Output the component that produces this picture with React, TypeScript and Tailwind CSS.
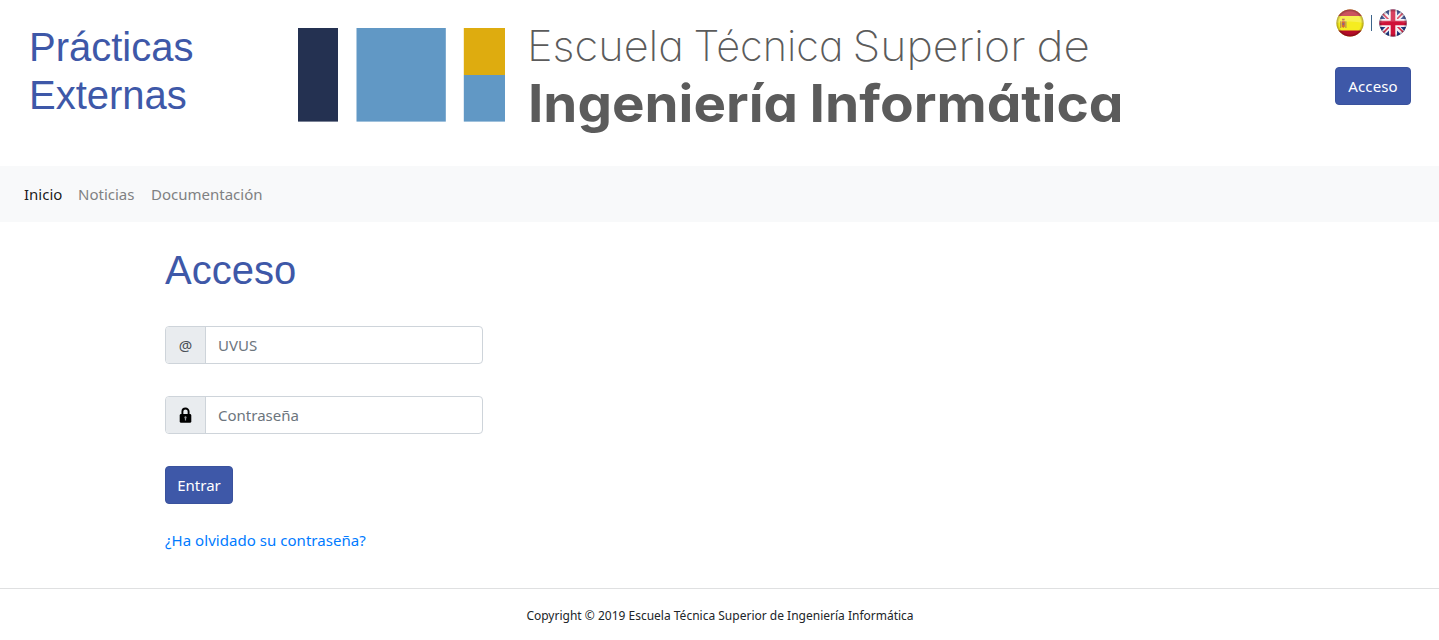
import React from "react";

const ui = "font-['Noto_Sans','Open_Sans',sans-serif]";
const heading = "font-['Liberation_Sans',Arial,sans-serif]";

const topWords = [
  { word: "Escuela", x: 527, width: 157 },
  { word: "Técnica", x: 693.5, width: 150 },
  { word: "Superior", x: 852.5, width: 173 },
  { word: "de", x: 1036.5, width: 53.5 },
];

const bottomWords = [
  { word: "Ingeniería", x: 528, width: 270 },
  { word: "Informática", x: 809.5, width: 314 },
];

function SchoolLogo() {
  return (
    <svg width="840" height="125" viewBox="290 20 840 125" role="img" aria-label="Escuela Técnica Superior de Ingeniería Informática">
      <rect x="298" y="28" width="40" height="93.6" fill="#243151" />
      <rect x="356.5" y="28" width="89.3" height="93.6" fill="#6198c5" />
      <rect x="463.8" y="28" width="41.2" height="47" fill="#deac0f" />
      <rect x="463.8" y="75" width="41.2" height="46.6" fill="#6198c5" />
      <g fill="#5b5b5b" className="font-['Inter',sans-serif] text-[42.5px] font-extralight [font-feature-settings:'cv11']">
        {topWords.map(({ word, x, width }) => (
          <text key={word} x={x} y="61" textLength={width} lengthAdjust="spacingAndGlyphs">{word}</text>
        ))}
      </g>
      <g fill="#5b5b5b" className="font-['Inter',sans-serif] text-[52px] font-bold [font-feature-settings:'cv11']">
        {bottomWords.map(({ word, x, width }) => (
          <text key={word} x={x} y="121.5" textLength={width} lengthAdjust="spacingAndGlyphs">{word}</text>
        ))}
      </g>
    </svg>
  );
}

function SpanishFlag() {
  return (
    <svg width="28" height="28" viewBox="0 0 28 28" role="img" aria-label="Español">
      <defs>
        <clipPath id="es-clip"><circle cx="14" cy="14" r="13.6" /></clipPath>
        <radialGradient id="es-shade" cx="50%" cy="50%" r="50%">
          <stop offset="78%" stopColor="#000" stopOpacity="0" />
          <stop offset="100%" stopColor="#300" stopOpacity=".4" />
        </radialGradient>
      </defs>
      <g clipPath="url(#es-clip)">
        <rect width="28" height="28" fill="#f5ed20" />
        <rect width="28" height="7" fill="#bd2433" />
        <rect y="21.5" width="28" height="6.5" fill="#b50d27" />
        <rect x="4" y="12" width="1.3" height="7" fill="#b99a4b" />
        <rect x="9.2" y="12" width="1.3" height="7" fill="#b99a4b" />
        <path d="M5.7 12h3.2v5.5l-1.6 1.6-1.6-1.6z" fill="#d46a35" />
        <path d="M5.9 9.8h2.9l-.4 1.7H6.3z" fill="#b64a38" />
        <rect x="6.4" y="14" width="1.8" height="2" fill="#8c6286" />
        <path d="M0 14Q14 11 28 14V0H0z" fill="#fff" opacity=".22" />
        <rect width="28" height="28" fill="url(#es-shade)" />
      </g>
    </svg>
  );
}

function BritishFlag() {
  return (
    <svg width="28" height="28" viewBox="0 0 28 28" role="img" aria-label="English">
      <defs>
        <clipPath id="en-clip"><circle cx="14" cy="14" r="13.6" /></clipPath>
        <radialGradient id="en-shade" cx="50%" cy="50%" r="50%">
          <stop offset="78%" stopColor="#000" stopOpacity="0" />
          <stop offset="100%" stopColor="#002" stopOpacity=".38" />
        </radialGradient>
      </defs>
      <g clipPath="url(#en-clip)">
        <rect width="28" height="28" fill="#203a84" />
        <path d="M1 1 27 27M27 1 1 27" stroke="#f3f1f5" strokeWidth="5" />
        <path d="M1 2 14 15M27 1 14 14M1 27 14 14M27 26 14 13" stroke="#d52745" strokeWidth="1.7" />
        <path d="M14 0V28M0 14H28" stroke="#f4f1f4" strokeWidth="8" />
        <path d="M14 0V28M0 14H28" stroke="#cf1238" strokeWidth="4.6" />
        <path d="M0 14Q14 11 28 14V0H0z" fill="#fff" opacity=".2" />
        <rect width="28" height="28" fill="url(#en-shade)" />
      </g>
    </svg>
  );
}

function LockIcon() {
  return (
    <svg width="13" height="16" viewBox="0 0 13 16" aria-hidden="true">
      <path d="M3.4 7.5V4.6a3.1 3.1 0 0 1 6.2 0v2.9" fill="none" stroke="#000" strokeWidth="1.9" />
      <rect x=".7" y="7" width="11.6" height="8.8" rx="1.4" fill="#000" />
      <path d="M6.5 9.3a1.2 1.2 0 0 0-.6 2.2v2.1h1.2v-2.1a1.2 1.2 0 0 0-.6-2.2z" fill="#9a9da0" />
    </svg>
  );
}

function Field({ icon, placeholder, type }: { icon: React.ReactNode; placeholder: string; type: string }) {
  return (
    <div className="flex h-[38px] w-[318px] rounded border border-[#ced4da] bg-white">
      <span className="flex w-[39px] shrink-0 items-center justify-center rounded-l-[3px] bg-[#e9ecef] text-[15px] text-[#495057]">{icon}</span>
      <input type={type} placeholder={placeholder} className="min-w-0 flex-1 rounded-r-[3px] border-l border-[#ced4da] px-3 text-[15px] text-[#495057] outline-none placeholder:text-[#6c757d]" />
    </div>
  );
}

export default function App() {
  return (
    <div className={`h-[640px] w-full overflow-hidden bg-white text-[15px] leading-6 text-[#212529] ${ui}`}>
      <header className="flex h-[166px]">
        <h1 className={`ml-[29px] mt-[23px] w-[261px] pr-16 text-[40px] leading-[48px] text-[#3e58a8] ${heading}`}>Prácticas Externas</h1>
        <div className="pt-5"><SchoolLogo /></div>
        <div className="ml-auto mr-7 flex w-[76px] flex-col pt-[9px]">
          <div className="flex h-7 items-center gap-[7px] pl-[1px]">
            <SpanishFlag />
            <span className="h-4 w-px shrink-0 bg-[#3c648b]" />
            <BritishFlag />
          </div>
          <button className="mt-[30px] h-[38px] w-[76px] rounded border border-[#3a529d] bg-[#3e58a8] text-[15px] tracking-[0.1px] text-white">Acceso</button>
        </div>
      </header>
      <nav className="flex h-14 items-center gap-4 bg-[#f8f9fa] pl-6 text-[#808182]">
        <a className="w-[38px] whitespace-nowrap text-black/90">Inicio</a>
        <a className="w-[57px] whitespace-nowrap">Noticias</a>
        <a className="whitespace-nowrap">Documentación</a>
      </nav>
      <main className="flex h-[366px] flex-col items-start pl-[165px] pt-6">
        <h2 className={`text-[40px] leading-[48px] text-[#3e58a8] ${heading}`}>Acceso</h2>
        <form className="mt-8 flex flex-col items-start gap-8">
          <Field icon="@" placeholder="UVUS" type="text" />
          <Field icon={<LockIcon />} placeholder="Contraseña" type="password" />
          <button type="button" className="h-[38px] w-[68px] rounded border border-[#3a529d] bg-[#3e58a8] text-[15px] text-white">Entrar</button>
        </form>
        <a className="mt-6 tracking-[0.04px] text-[#007bff]">¿Ha olvidado su contraseña?</a>
      </main>
      <footer className="border-t border-[#dfe0e1] pl-px pt-4 text-center text-[12px] leading-[21px]">
        Copyright © 2019 Escuela Técnica Superior de Ingeniería Informática
      </footer>
    </div>
  );
}
